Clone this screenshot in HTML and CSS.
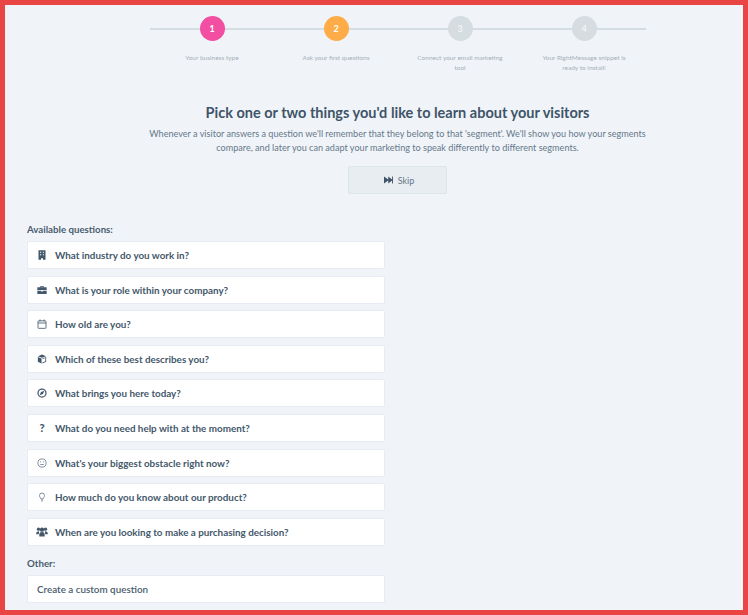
FILE: index.html
```html
<!DOCTYPE html>
<html lang="en">
<head>
    <meta charset="UTF-8">
    <meta name="viewport" content="width=device-width, initial-scale=1.0">
    <title>Pick your questions</title>
    <link rel="stylesheet" href="styles.css">
</head>
<body>
    <div class="frame">
        <div class="steps">
            <div class="step">
                <div class="step-circle step-pink">1</div>
                <div class="step-label">Your business type</div>
            </div>
            <div class="step">
                <div class="step-circle step-orange">2</div>
                <div class="step-label">Ask your first questions</div>
            </div>
            <div class="step">
                <div class="step-circle">3</div>
                <div class="step-label">Connect your email marketing tool</div>
            </div>
            <div class="step">
                <div class="step-circle">4</div>
                <div class="step-label">Your RightMessage snippet is ready to install!</div>
            </div>
        </div>

        <div class="intro">
            <h1>Pick one or two things you'd like to learn about your visitors</h1>
            <p>Whenever a visitor answers a question we'll remember that they belong to that 'segment'. We'll show you how your segments compare, and later you can adapt your marketing to speak differently to different segments.</p>
            <button type="button" class="skip-btn">
                <svg class="skip-icon" viewBox="0 0 10 8"><path d="M0 0 4.700 3.400V0L9 3.400V0H10V8H9V4.600L4.700 8V4.600L0 8Z"/></svg>
                Skip
            </button>
        </div>

        <div class="questions">
            <div class="list-title">Available questions:</div>
            <div class="question-list">
                <div class="question">
                    <svg class="icon" viewBox="0 0 12 12"><path fill-rule="evenodd" d="M1.800 .2h8.400v11.600H7.200V9.800H4.800v2H1.800ZM3.600 2v1.400H5V2ZM7 2v1.400h1.400V2ZM3.600 5v1.400H5V5ZM7 5v1.400h1.400V5Z"/></svg>
                    What industry do you work in?
                </div>
                <div class="question">
                    <svg class="icon" viewBox="0 0 12 12"><path d="M4 2.600V1.200h4v1.400h3.600V6H.4V2.600ZM5 2.600h2V2H5ZM.4 6.800h4.600v1h2v-1h4.600v3.900H.4Z"/></svg>
                    What is your role within your company?
                </div>
                <div class="question">
                    <svg class="icon icon-line" viewBox="0 0 12 12"><rect x="1.200" y="2.200" width="9.600" height="9" rx=".8"/><path d="M1.200 4.800h9.600M3.600 .6v2.200M8.400 .6v2.200"/></svg>
                    How old are you?
                </div>
                <div class="question">
                    <svg class="icon" viewBox="0 0 12 12"><path d="M6 .7 10.800 2.600 6 4.500 1.200 2.600ZM1 3.500 5.500 5.300V11.300L1 9.300ZM11 3.500V9.300L6.500 11.300V10.200L10 8.600V4.900L6.500 6.300V5.300Z"/></svg>
                    Which of these best describes you?
                </div>
                <div class="question">
                    <svg class="icon icon-line icon-heavy" viewBox="0 0 12 12"><circle cx="6" cy="6" r="4.800"/><path class="fill-path" d="M8.800 3.200 7.200 7.200 3.200 8.800 4.800 4.800Z"/></svg>
                    What brings you here today?
                </div>
                <div class="question">
                    <span class="icon icon-glyph">?</span>
                    What do you need help with at the moment?
                </div>
                <div class="question">
                    <svg class="icon icon-line icon-pale" viewBox="0 0 12 12"><circle cx="6" cy="6" r="4.900"/><path d="M4 7.800h4M3.600 4.700h1.200M7.200 4.700h1.200"/></svg>
                    What's your biggest obstacle right now?
                </div>
                <div class="question">
                    <svg class="icon icon-line icon-pale" viewBox="0 0 12 12"><path d="M4.600 8.200C4.400 6.800 3 6.200 3 4.200a3 3 0 0 1 6 0C9 6.200 7.600 6.800 7.400 8.200Z"/><path d="M4.800 9.600h2.400M5.300 11h1.400"/></svg>
                    How much do you know about our product?
                </div>
                <div class="question">
                    <svg class="icon icon-wide" viewBox="0 0 14 12"><circle cx="2.800" cy="2.600" r="2"/><circle cx="11.200" cy="2.600" r="2"/><circle cx="7" cy="3.200" r="2.600"/><path d="M0 8.800C0 6.200 1 5.200 3.600 5.200L3.200 8.800ZM14 8.800C14 6.200 13 5.200 10.400 5.200L10.800 8.800ZM3.800 11.400C3.400 7.600 4.400 6 7 6s3.600 1.600 3.200 5.400Z"/></svg>
                    When are you looking to make a purchasing decision?
                </div>
            </div>

            <div class="list-title other-title">Other:</div>
            <div class="question question-custom">Create a custom question</div>
        </div>
    </div>
</body>
</html>
```

FILE: styles.css
```css
html, body {
    margin: 0;
    height: 100%;
}
body {
    font-family: Lato, "Open Sans", sans-serif;
    background-color: #f0f4f9;
    color: #3f5468;
}
.frame {
    box-sizing: border-box;
    height: 615px;
    overflow: hidden;
    border: 5px solid #ea4545;
    padding: 11px 22px 0;
}

/* stepper */
.steps {
    display: flex;
    width: 496px;
    margin-left: 123px;
    background: linear-gradient(#d3dee3, #d3dee3) no-repeat 0 11.5px / 100% 2px;
}
.step {
    flex: 1;
    display: flex;
    flex-direction: column;
    align-items: center;
}
.step-circle {
    width: 25px;
    height: 25px;
    border-radius: 50%;
    background-color: #d5dde1;
    color: #f0f4f7;
    font-size: 9px;
    font-weight: bold;
    line-height: 25px;
    text-align: center;
}
.step-pink {
    background-color: #f24ea2;
    color: white;
}
.step-orange {
    background-color: #fdac47;
    color: white;
}
.step-label {
    width: 92px;
    margin-top: 12px;
    font-size: 6.500px;
    line-height: 10px;
    color: #a5afb7;
    text-align: center;
}

/* heading */
.intro {
    width: 501px;
    margin: 30px 0 0 120px;
    text-align: center;
}
h1 {
    margin: 0;
    font-size: 14.500px;
    line-height: 20px;
    color: #3f5468;
}
.intro p {
    margin: 4px 0 0;
    font-size: 9.100px;
    line-height: 14px;
    color: #66788a;
}
.skip-btn {
    display: inline-flex;
    align-items: center;
    justify-content: center;
    gap: 5px;
    width: 99px;
    height: 28px;
    margin-top: 11px;
    padding: 0 0 0 3px;
    border: 1px solid #dfe6ea;
    border-radius: 2px;
    background-color: #e7edf0;
    color: #66788a;
    font-family: inherit;
    font-size: 9px;
}
.skip-icon {
    width: 9px;
    height: 8px;
    fill: #3f5468;
}

/* question list */
.questions {
    width: 358px;
    margin-top: 29px;
}
.list-title {
    font-size: 9.700px;
    font-weight: bold;
    line-height: 12px;
    color: #4a5c6d;
}
.question-list {
    display: flex;
    flex-direction: column;
    gap: 6.600px;
    margin-top: 6px;
}
.question {
    box-sizing: border-box;
    display: flex;
    align-items: center;
    height: 28px;
    padding-left: 9px;
    border: 1px solid #e6ecf1;
    border-radius: 2px;
    background-color: white;
    font-size: 9.850px;
    font-weight: bold;
    color: #44586b;
}
.icon {
    flex: none;
    width: 10px;
    height: 10px;
    margin-right: 8px;
    fill: #44586b;
}
.icon-wide {
    width: 12px;
    margin-left: -1px;
    margin-right: 7px;
}
.icon-line {
    fill: none;
    stroke: #44586b;
    stroke-width: 1;
}
.icon-pale {
    stroke: #66788a;
}
.icon-heavy {
    stroke-width: 1.500;
}
.fill-path {
    fill: #44586b;
    stroke: none;
}
.icon-glyph {
    font-size: 11px;
    font-weight: 900;
    line-height: 10px;
    text-align: center;
}
.other-title {
    margin-top: 11px;
}
.question-custom {
    margin-top: 6px;
    font-weight: 600;
    color: #4a5c6d;
}
```
